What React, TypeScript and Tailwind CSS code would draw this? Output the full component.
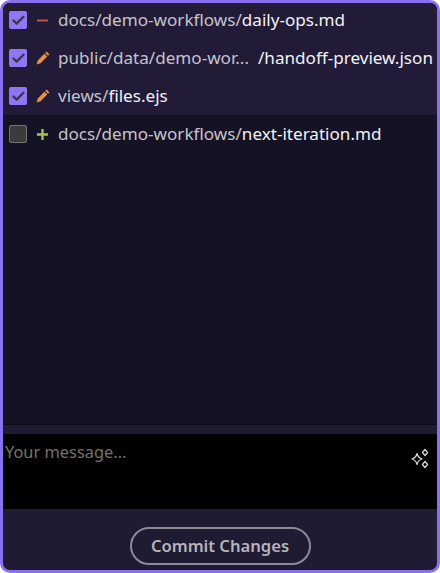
import { Minus, Plus, Check } from 'lucide-react';

function Box({ checked }: { checked: boolean }) {
  if (!checked) return <span className="h-[18px] w-[18px] shrink-0 rounded-[2px] border border-[#77757c] bg-[#3b3b3b]" />;
  return (
    <span className="flex h-[18px] w-[18px] shrink-0 items-center justify-center rounded-[2px] bg-[#8f76f5]">
      <Check className="h-[15px] w-[15px] text-[#3a3349]" strokeWidth={3.5} />
    </span>
  );
}

function PencilMark() {
  return (
    <svg className="h-[14px] w-[14px] shrink-0" viewBox="0 0 14 14" fill="#e2954a">
      <path d="M10.6 0.6 L13.4 3.4 L12 4.8 L9.2 2 Z" />
      <path d="M8.4 2.8 L11.2 5.6 L4.6 12.2 L0.6 13.4 L1.8 9.4 Z" />
    </svg>
  );
}

function Row({ checked, kind, dir, name, first }: { checked: boolean; kind: 'del' | 'mod' | 'add'; dir: string; name: string; first?: boolean }) {
  return (
    <div className={`flex items-center pl-[6px] pr-1 ${first ? 'h-[36px] pb-[2px]' : 'h-[38px]'} ${checked ? 'bg-[#211b38]' : ''}`}>
      <Box checked={checked} />
      <span className="ml-[9px] flex w-[13px] shrink-0 justify-center">
        {kind === 'del' && <Minus className="h-[19px] w-[19px] shrink-0 text-[#c4534f]" strokeWidth={2.4} strokeLinecap="butt" />}
        {kind === 'add' && <Plus className="h-[19px] w-[19px] shrink-0 text-[#a3c261]" strokeWidth={3} strokeLinecap="butt" />}
        {kind === 'mod' && <PencilMark />}
      </span>
      <span className="ml-[9px] whitespace-nowrap text-[17.1px] text-[#c4c3cb]">
        {dir}
        <span className="text-[#f2f1f5]">{name}</span>
      </span>
    </div>
  );
}

export default function App() {
  return (
    <div className="flex h-[573px] w-[440px] flex-col overflow-hidden rounded-[10px] border-[3px] border-[#8a70ef] bg-[#1f1b33] font-['Noto_Sans','Liberation_Sans',sans-serif]">
      <div className="flex-1 border-b border-[#0c0a14] bg-[#151225]">
        <Row first checked kind="del" dir="docs/demo-workflows/" name="daily-ops.md" />
        <div className="flex h-[38px] items-center bg-[#211b38] pl-[6px] pr-1">
          <Box checked />
          <span className="ml-[9px] flex w-[13px] shrink-0 justify-center">
            <PencilMark />
          </span>
          <span className="ml-[9px] w-[200px] whitespace-nowrap text-[17.1px] text-[#c4c3cb]">public/data/demo-wor...</span>
          <span className="whitespace-nowrap text-[17.1px] text-[#f2f1f5]">/handoff-preview.json</span>
        </div>
        <Row checked kind="mod" dir="views/" name="files.ejs" />
        <Row checked={false} kind="add" dir="docs/demo-workflows/" name="next-iteration.md" />
      </div>
      <div className="h-[9px] shrink-0" />
      <div className="relative h-[75px] shrink-0 bg-black">
        <textarea
          placeholder="Your message..."
          className="h-full w-full resize-none bg-transparent px-[2px] py-0 text-[16.4px] leading-[36px] text-white outline-none placeholder:text-[#75706c]"
        />
        <svg className="absolute right-[6px] top-[14px] h-[22px] w-[22px]" viewBox="0 0 22 22" fill="none" stroke="#d8d8d8" strokeWidth="1.2" strokeLinejoin="round">
          <path d="M8 5.5 C8.7 8.6 9.9 10 13 11 C9.9 12 8.7 13.4 8 16.5 C7.3 13.4 6.1 12 3 11 C6.1 10 7.3 8.6 8 5.5 Z" />
          <path d="M16 1.5 L18.6 4.5 L16 7.5 L13.4 4.5 Z" />
          <path d="M16 13.5 L18.6 16.5 L16 19.5 L13.4 16.5 Z" />
        </svg>
      </div>
      <div className="flex shrink-0 basis-[61px] items-start justify-center pt-[18px]">
        <button className="h-[38px] w-[181px] rounded-full border-2 border-[#8c8a94] text-[16.6px] font-semibold text-[#b5b4bb]">
          Commit Changes
        </button>
      </div>
    </div>
  );
}
